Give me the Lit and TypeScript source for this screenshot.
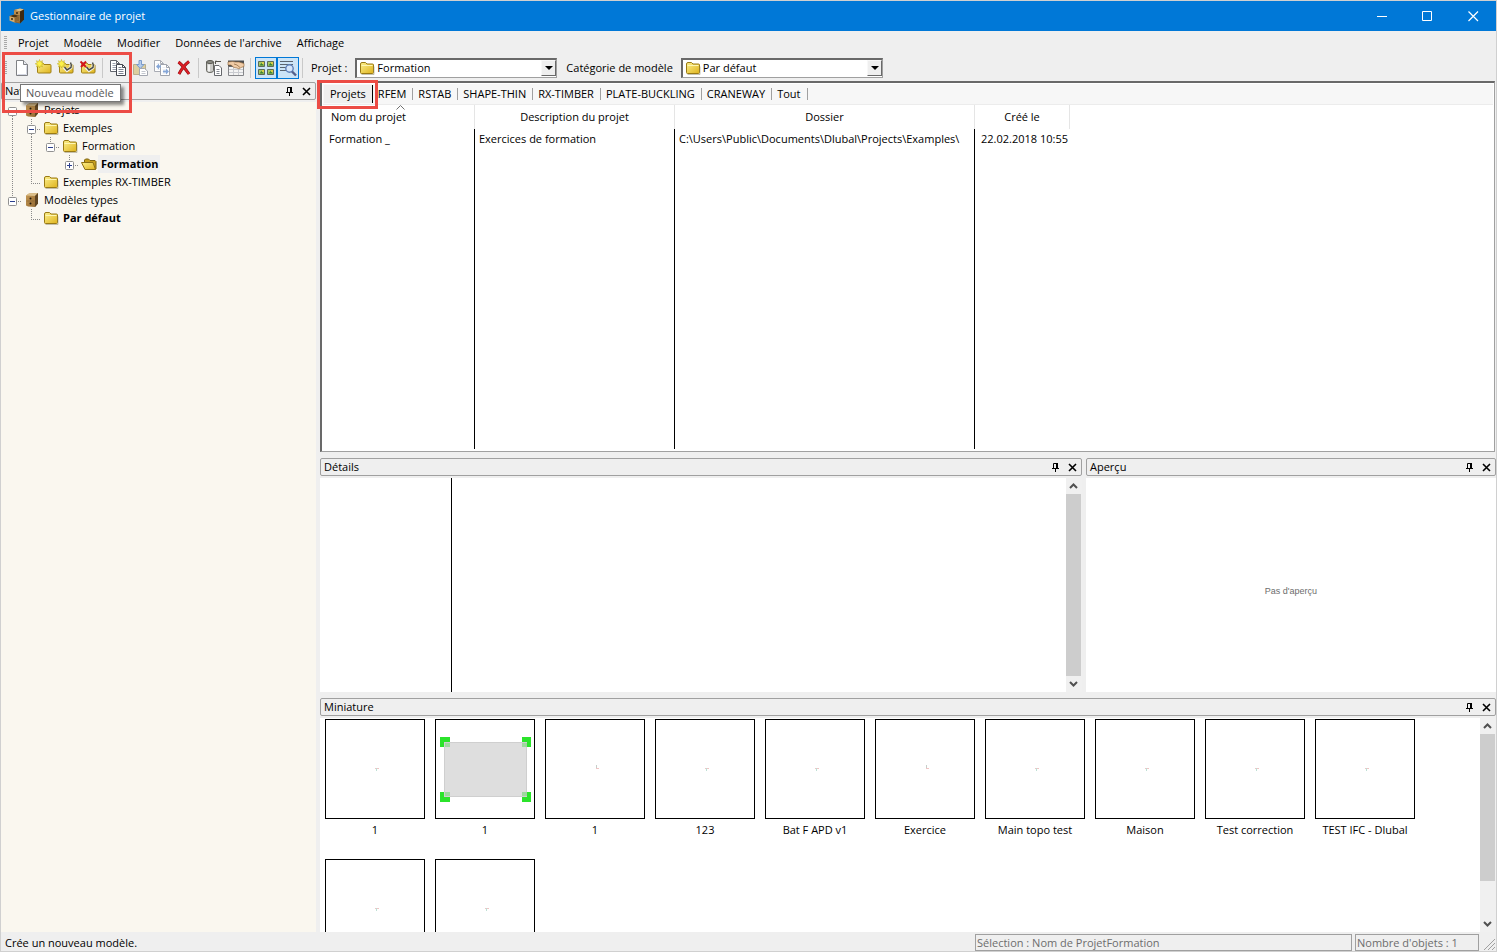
import { LitElement, html, css, svg, nothing } from "lit";
import { customElement } from "lit/decorators.js";
import { classMap } from "lit/directives/class-map.js";

const defs = svg`
  <defs>
    <linearGradient id="fy" x1="0" y1="0" x2="1" y2="1">
      <stop offset="0" stop-color="#fbef8c"/><stop offset="1" stop-color="#dfb31c"/>
    </linearGradient>
    <linearGradient id="wd" x1="0" y1="0" x2="1" y2="1">
      <stop offset="0" stop-color="#c79a55"/><stop offset="1" stop-color="#8f6630"/>
    </linearGradient>
  </defs>`;

const folder = html`<svg width="16" height="16" viewBox="0 0 16 16" aria-hidden="true">${defs}
  <path d="M1.500 4q0-1.500 1.500-1.500h3.500l1.500 1.500h5.500q1 0 1 1v7.500q0 1-1 1H2.500q-1 0-1-1z" fill="url(#fy)" stroke="#9a7b14"/>
  <path d="M2.500 5.500h11" stroke="#fdf6b4"/><path d="M2.500 14.500h12.500v-8" fill="none" stroke="#8d8768" stroke-opacity=".5"/></svg>`;

const folderOpen = html`<svg width="16" height="16" viewBox="0 0 16 16" aria-hidden="true">${defs}
  <path d="M3.500 12.500v-8.500l1-1h3l1.500 1.500h5l1 1v7.500z" fill="#c79f1e" stroke="#7c6412"/>
  <path d="M.5 6.500h11.500l2.500 7H4z" fill="url(#fy)" stroke="#8d7015"/></svg>`;

const cabinet = html`<svg width="16" height="16" viewBox="0 0 16 16" aria-hidden="true">${defs}
  <path d="M2 3.500l3-2 9-.5v10.500l-3 3.500-7-.5-2-1z" fill="url(#wd)"/><path d="M2 3.500l3-2 9-.5-3 3z" fill="#dcc08b"/>
  <path d="M11 4l3-3v10.500l-3 3.500z" fill="#5f4522"/><path d="M2.500 9h8" stroke="#8a6534" stroke-width=".7"/>
  <circle cx="6.500" cy="6.500" r="1" fill="#22180a"/><circle cx="6.500" cy="11.500" r="1" fill="#22180a"/></svg>`;

const appIcon = html`<svg width="16" height="16" viewBox="0 0 16 16" aria-hidden="true">
  <path d="M5 2l6-1.500 4 1v10l-4 4-5-1z" fill="#8a6534"/><path d="M5 2l6-1.500 4 1-4 2z" fill="#dcc08b"/><path d="M11 3.500l4-2v10l-4 4z" fill="#3f2a10"/>
  <path d="M5 2.500l6 1v4l-6-1z" fill="#b98c4c"/><path d="M.5 8l5-1.500 5 1.500v5l-5 1.500-5-2z" fill="#d6ab69"/><path d="M.5 8l5-1.500 5 1.500-5 1.500z" fill="#4a3314"/>
  <path d="M5.500 9.500l5-1.500v5l-5 1.500z" fill="#8d6632"/><circle cx="8" cy="5" r=".9" fill="#2a1c08"/><circle cx="3" cy="11" r=".9" fill="#2a1c08"/></svg>`;

const star = svg`<path d="M4.500.5l.8 2.200L7.500 1.700 6.600 4l2.200.8-2.200.9.900 2.200-2.200-1L4.500 9l-.9-2.100-2.200 1 .9-2.200L.2 4.800l2.100-.8-.9-2.300 2.200 1z" fill="#fdf14a" stroke="#b9a51b" stroke-width=".5"/>`;
const base = svg`<path d="M2.500 5.500q0-1.500 1.500-1.500h4l1 1.500h6q1 0 1 1v6.500q0 1-1 1H3.500q-1 0-1-1z" fill="url(#fy)" stroke="#a08018"/>`;
const hook = svg`<path d="M7 8.500l3 3L14 8.500V3.500" fill="none" stroke="#f4f4ee" stroke-width="3"/><path d="M7.500 8l2.500 3 4-2.500q1-2-.5-5" fill="none" stroke="#4b4b42" stroke-width="1.500"/>`;
const sheet = (x: number, y: number, c: string, l: string) => svg`
  <path d="M${x} ${y}h6l3 3v8h-9z" fill="#fff" stroke="${c}"/><path d="M${x + 6} ${y}v3h3" fill="none" stroke="${c}"/>
  <path d="M${x + 2} ${y + 3}h3M${x + 2} ${y + 5}h5M${x + 2} ${y + 7}h5M${x + 2} ${y + 9}h5" stroke="${l}"/>`;

const icon = (body: unknown) =>
  html`<svg width="18" height="18" viewBox="0 0 18 18" aria-hidden="true">${defs}${body}</svg>`;

const icons = {
  file: icon(svg`<path d="M3.500 1.500h7l4 4v11h-11z" fill="#fff" stroke="#7f8185"/><path d="M10.500 1.500v4h4" fill="#e8eaf0" stroke="#7f8185"/><path d="M4.500 15.500h9v-9" fill="none" stroke="#d4d7e2"/>`),
  folderNew: icon(svg`${base}${star}`),
  folderLink: icon(svg`${base}${star}${hook}`),
  folderUnlink: icon(svg`${base}${hook}<path d="M1.500 2.500l5.500 5.500M7 2.500L2 8" stroke="#d4161c" stroke-width="1.900"/>`),
  copy: icon(svg`${sheet(1.5, 1.5, "#62656d", "#9aa0ad")}${sheet(7.5, 5.5, "#44474f", "#7d8391")}`),
  paste: icon(svg`<path d="M2.500 5.500h12v10h-12z" fill="#ddcf9f" stroke="#b9ae8d"/><path d="M8 1.500h2.500v4h2.500l-3.700 4-3.800-4H8z" fill="#b5cdee" stroke="#7c9ccb"/>
    <path d="M8.500 9.500h5l3 2.500v4.500h-8z" fill="#fff" stroke="#a3a7b0"/><path d="M10.500 12.500h4M10.500 14.500h4" stroke="#c3c7cf"/>`),
  duplicate: icon(svg`${sheet(1.5, 1.5, "#a9acb4", "#eef0f4")}${sheet(7.5, 5.5, "#a0a4ad", "#eef0f4")}<path d="M3 7.500l3-3v2h2v2H6v2zM16 12.500l-3-3v2h-3v2h3v2z" fill="#86a7d8"/>`),
  remove: icon(svg`<path d="M3.500 3q5 4 10.500 12M14 2.500Q8 7 4 15" fill="none" stroke="#8f1014" stroke-width="3"/><path d="M3.500 3q5 4 10.500 12M14 2.500Q8 7 4 15" fill="none" stroke="#dd1f26" stroke-width="1.800"/>`),
  archive: icon(svg`<path d="M1.500 3v8.500q0 2 3.500 2t3.500-2V3" fill="#c9c9c6" stroke="#66665f"/><ellipse cx="5" cy="3" rx="3.500" ry="1.500" fill="#8f8f88" stroke="#55554f"/><path d="M4 5.500v7" stroke="#fff" stroke-width="1.500"/>
    <path d="M10.500 5V2.500h5.500M10 3.500l1-2" fill="none" stroke="#55554f"/><path d="M9.500 6.500h4.500l2.500 2.500v7.500h-7z" fill="#fff" stroke="#66686c"/><path d="M11.500 10.500h3M11.500 12.500h3M11.500 14.500h3" stroke="#868a92"/>`),
  share: icon(svg`<path d="M1.500 7.500h15v9h-15z" fill="#f4f4f4" stroke="#85868a"/><path d="M2 10.500h14M2 13.500h14M6.500 8v8M11.500 8v8" stroke="#c9cbd0"/><path d="M1 1.500h16v6H1z" fill="#4b4c50"/>
    <path d="M1 3l4.500-.5 3 .5 3.500 0 5 1.500v3l-3 1-2 1.500-2-1-3-.5L4 6H1z" fill="#f0cba6" stroke="#8a6238" stroke-width=".6"/><path d="M7 5l3 1 3 2.500" fill="none" stroke="#8a6238" stroke-width=".7"/>`),
  tiles: icon(svg`${[[1.5, 2.5], [10.5, 2.5], [1.5, 10.5], [10.5, 10.5]].map(
    ([x, y]) => svg`<path d="M${x} ${y}h6v5h-6z" fill="#a5c864" stroke="#5c6b57"/><path d="M${x + 1} ${y + 4}l2-2.500 2.500 2.500z" fill="#3c8130"/><path d="M${x + 3.5} ${y + 1.5}h2" stroke="#efd23c" stroke-width="1.400"/>`)}`),
  details: icon(svg`<path d="M1 2.500h13M1 5.500h13M1 8.500h7M1 11.500h6" stroke="#5a6470" stroke-width="1.200"/><circle cx="10.500" cy="9.500" r="3.700" fill="#d5e6fb" stroke="#5e7fb8" stroke-width="1.400"/><path d="M13 12.500l4 4" stroke="#54608c" stroke-width="2.400"/>`),
};

const pin = html`<svg width="9" height="9" viewBox="0 0 9 9" aria-hidden="true"><path d="M2.500 5V.5h4V5M1 5.500h7M4.500 6v3" fill="none" stroke="#000"/><path d="M6 0v5" stroke="#000" stroke-width="2"/></svg>`;
const cross = html`<svg width="9" height="9" viewBox="0 0 9 9" aria-hidden="true"><path d="M1 1l7 7M8 1L1 8" stroke="#000" stroke-width="1.600"/></svg>`;
const chevron = (up: boolean) => html`<svg width="9" height="6" viewBox="0 0 9 6" aria-hidden="true"><path d="${up ? "M1 5l3.500-3.500L8 5" : "M1 1l3.500 3.500L8 1"}" fill="none" stroke="#505050" stroke-width="2"/></svg>`;

type Guide = "v" | "first" | "mid" | "last" | "plus" | "elbow" | "none";
interface Row { label: string; guides: Guide[]; icon: unknown; bold?: boolean; selected?: boolean; }

const rows: Row[] = [
  { label: "Projets", guides: ["first"], icon: cabinet },
  { label: "Exemples", guides: ["v", "mid"], icon: folder },
  { label: "Formation", guides: ["v", "v", "last"], icon: folder },
  { label: "Formation", guides: ["v", "v", "none", "plus"], icon: folderOpen, bold: true, selected: true },
  { label: "Exemples RX-TIMBER", guides: ["v", "elbow"], icon: folder },
  { label: "Modèles types", guides: ["last"], icon: cabinet },
  { label: "Par défaut", guides: ["none", "elbow"], icon: folder, bold: true },
];

const guide = (g: Guide) => {
  const boxed = ["first", "mid", "last", "plus"].includes(g);
  return html`<svg width="19" height="18" viewBox="0 0 19 18" aria-hidden="true">
    ${g === "v" ? svg`<path d="M9.500 0v18" class="dots"/>` : nothing}
    ${g === "elbow" ? svg`<path d="M9.500 0v10M9 10.500h10" class="dots"/>` : nothing}
    ${boxed ? svg`
      ${g !== "first" ? svg`<path d="M9.500 0v6" class="dots"/>` : nothing}
      ${g === "first" || g === "mid" ? svg`<path d="M9.500 15v3" class="dots"/>` : nothing}
      <path d="M15 10.500h4" class="dots"/>
      <rect x="5.500" y="6.500" width="8" height="8" rx="1" fill="#fff" stroke="#919191"/>
      <path d="${g === "plus" ? "M7 10.500h5M9.500 8v5" : "M7 10.500h5"}" stroke="#2b3f8e"/>` : nothing}
  </svg>`;
};

@customElement("dock-panel")
export class DockPanel extends LitElement {
  static properties = { heading: { type: String } };
  declare heading: string;
  static styles = css`
    :host { display: flex; flex-direction: column; min-width: 0; min-height: 0; }
    .bar { display: flex; align-items: center; height: 18px; border: 1px solid #a0a0a0; border-radius: 2px; box-sizing: border-box; padding-left: 3px; background: #efefef; flex: none; }
    h2 { flex: 1; margin: 0; font-size: 11px; font-weight: 400; line-height: 16px; }
    button { all: unset; display: grid; place-items: center; width: 17px; height: 14px; }
    .body { flex: 1; display: flex; min-height: 0; margin-top: 2px; background: var(--panel-bg, #fff); overflow: hidden; }
  `;
  render() {
    return html`<div class="bar"><h2>${this.heading}</h2>
      <button type="button" aria-label="Épingler">${pin}</button><button type="button" aria-label="Fermer">${cross}</button></div>
      <div class="body"><slot></slot></div>`;
  }
}

@customElement("scroll-bar")
export class ScrollBar extends LitElement {
  static properties = { share: { type: Number } };
  declare share: number;
  static styles = css`
    :host { display: flex; flex-direction: column; width: 15px; flex: none; background: #f0f0f0; border-right: 1px solid #f0f0f0; }
    .arrow { all: unset; display: grid; place-items: center; height: 16px; flex: none; }
    .track { flex: 1; }
    .thumb { background: #cdcdcd; }
  `;
  render() {
    return html`<button type="button" class="arrow" aria-label="Défiler vers le haut">${chevron(true)}</button>
      <div class="track"><div class="thumb" style="height:${this.share}%"></div></div>
      <button type="button" class="arrow" aria-label="Défiler vers le bas">${chevron(false)}</button>`;
  }
}

@customElement("app-root")
export class AppRoot extends LitElement {
  static styles = css`
    :host { display: flex; flex-direction: column; position: relative; height: 100vh; box-sizing: border-box; border: 1px solid #d0d0d0; overflow: hidden;
      background: #efefef; color: #000; font: 11px/18px "Open Sans", "Noto Sans", sans-serif; }
    svg { display: block; flex: none; }
    button { all: unset; box-sizing: border-box; }
    .title { display: flex; align-items: center; height: 30px; padding-left: 8px; background: #0078d7; color: #fff; flex: none; }
    .title h1 { flex: 1; margin: 0 0 0 5px; font-size: 11px; font-weight: 400; }
    .title button { display: grid; place-items: center; width: 46px; height: 28px; }
    .menu { display: flex; align-items: center; height: 23px; gap: 15px; padding-left: 3px; flex: none; }
    .grip { width: 3px; height: 14px; background: repeating-linear-gradient(#a8a8a8 0 1px, transparent 1px 2px); }
    .menu .grip { margin-right: -4px; }
    .tools { display: flex; align-items: center; height: 27px; padding-left: 3px; flex: none; }
    .tools .grip { margin-right: 4px; }
    .tool { display: grid; place-items: center; width: 22px; height: 22px; }
    .tool.on { border: 1px solid #0078d7; background: #cce4f7; }
    .sep { width: 1px; height: 20px; margin: 0 4px 0 3px; background: #c9c9c9; }
    .tools label { margin: 0 8px 0 4px; }
    .tools .combo + label { margin-left: 9px; }
    .combo { position: relative; display: flex; width: 202px; height: 20px; box-sizing: border-box; border: 1px solid #a0a0a0; border-top: 2px solid #696969; border-left: 2px solid #696969; background: #fff; }
    .combo svg { position: absolute; left: 2px; top: 0; pointer-events: none; }
    .combo select { appearance: none; flex: 1; border: 0; margin: 0; padding: 0 18px 2px 20px; background: none; font: inherit; line-height: 15px; color: #000; }
    .combo .drop { position: absolute; right: 0; top: 0; width: 15px; height: 16px; box-sizing: border-box; border: 1px solid #f8f8f8; border-right-color: #696969; border-bottom-color: #696969; background: #efefef; pointer-events: none; }
    .drop::after { content: ""; position: absolute; left: 3px; top: 5px; border: 4px solid transparent; border-top-color: #000; border-bottom: 0; }
    .work { flex: 1; display: grid; grid-template-columns: 315px minmax(0, 1fr); column-gap: 4px; min-height: 0; }
    .nav { --panel-bg: #faf7ef; padding-top: 1px; }
    .tree { list-style: none; margin: -1px 0 0; padding: 0 0 0 2px; }
    .tree li { display: flex; align-items: center; height: 18px; }
    .tree .ico { width: 19px; display: grid; place-items: center; }
    .tree .name { padding: 0 2px 0 3px; }
    .bold { font-weight: 700; }
    .picked { background: #efefef; }
    .dots { fill: none; stroke: #8a8a8a; stroke-dasharray: 1 1; }
    .main { display: grid; grid-template-rows: 371fr 234fr 234fr; row-gap: 6px; min-height: 0; }
    .list { display: flex; flex-direction: column; min-height: 0; border: 1px solid #a0a0a0; border-top: 2px solid #696969; border-left: 2px solid #696969; margin-right: 1px; padding: 1px 1px 2px; background: #fff; }
    .tabs { display: flex; align-items: center; height: 21px; background: #f7f7f7; flex: none; border-bottom: 1px solid #ececec; box-sizing: border-box; padding-left: 1px; }
    .tabs button { padding: 0 6px 0 5px; height: 12px; line-height: 12px; border-right: 1px solid #a0a0a0; }
    .tabs .current { height: 18px; line-height: 18px; padding-left: 6px; border-right-color: #000; background: #efefef; }
    table { flex: 1; width: 100%; height: 100%; table-layout: fixed; border-collapse: separate; border-spacing: 0; }
    .wrap { flex: 1; min-height: 0; display: flex; }
    th { position: relative; height: 24px; padding: 0 6px; font-weight: 400; border-right: 1px solid #e5e5e5; box-sizing: border-box; }
    th:first-child { text-align: left; padding-left: 8px; }
    td { height: 20px; padding: 0 0 0 4px; border-right: 1px solid #000; white-space: nowrap; overflow: hidden; box-sizing: border-box; }
    td:first-child { padding-left: 6px; }
    td:nth-child(4) { padding-left: 6px; }
    td:nth-child(n + 4), th:last-child { border-right: 0; }
    .fill td { height: auto; }
    .sort { position: absolute; left: 73px; top: 0; }
    .c1 { width: 152px; } .c2 { width: 200px; } .c3 { width: 300px; } .c4 { width: 95px; }
    .pair { display: grid; grid-template-columns: 762fr 410fr; column-gap: 4px; min-height: 0; }
    .props { flex: 1; display: flex; }
    .props .key { width: 131px; border-right: 1px solid #000; }
    .empty { margin: auto; padding-top: 12px; color: #6d6d6d; font: 9px/12px "Liberation Sans", sans-serif; }
    .thumbs { flex: 1; display: flex; flex-wrap: wrap; align-content: flex-start; gap: 10px; padding: 1px 5px; list-style: none; margin: 0; }
    .thumbs li { width: 100px; height: 130px; text-align: center; white-space: nowrap; }
    .thumbs .pic { border: 1px solid #000; margin-bottom: 2px; }
    .status { display: flex; align-items: center; height: 19px; box-sizing: border-box; padding: 2px 0 0 4px; gap: 3px; flex: none; }
    .status .hint { flex: 1; margin: 0; }
    .cell { height: 17px; line-height: 16px; box-sizing: border-box; border: 1px solid #a0a0a0; padding-left: 1px; color: #6d6d6d; }
    .cell.wide { width: 377px; } .cell.short { width: 124px; }
    .status svg { align-self: flex-end; }
    .tip { position: absolute; left: 19px; top: 83px; height: 18px; line-height: 16px; box-sizing: border-box; border: 1px solid #767676; background: #fff; color: #575757; padding: 0 6px 0 5px; box-shadow: 3px 3px 3px rgba(0, 0, 0, .45); }
    .mark { position: absolute; border: 3px solid #ec4c45; box-sizing: border-box; pointer-events: none; }
    .mark.new { left: 1px; top: 51px; width: 130px; height: 61px; }
    .mark.tab { left: 316px; top: 79px; width: 61px; height: 29px; }
  `;

  private tools: [keyof typeof icons | "sep", string][] = [
    ["file", "Nouveau modèle"], ["folderNew", "Nouveau projet"], ["folderLink", "Relier un projet"], ["folderUnlink", "Dissocier un projet"], ["sep", ""],
    ["copy", "Copier"], ["paste", "Coller"], ["duplicate", "Dupliquer"], ["remove", "Supprimer"], ["sep", ""],
    ["archive", "Archiver"], ["share", "Partager"], ["sep", ""], ["tiles", "Miniature"], ["details", "Détails"], ["sep", ""],
  ];

  private combo(id: string, value: string) {
    return html`<div class="combo">${folder}<select id=${id}><option>${value}</option></select><span class="drop"></span></div>`;
  }

  private thumb(name: string, kind: string) {
    return html`<li><svg class="pic" width="98" height="98" viewBox="0 0 98 98" aria-hidden="true">
      ${kind === "plate" ? svg`
        <path d="M4 17h10v10H4zM86 17h9v10H86zM4 72h10v10H4zM86 72h9v10H86z" fill="#2be32b"/>
        <rect x="8.500" y="22.500" width="82" height="54" fill="#dcdcdc" fill-opacity=".93" stroke="#cfcfcf"/>
        <path d="M9 23h5v4H9zM86 23h5v4h-5zM9 72h5v4H9zM86 72h5v4h-5z" fill="#7fd67f" fill-opacity=".6"/>`
      : kind === "corner" ? svg`<path d="M50.500 45v3" stroke="#c6cfca"/><path d="M50 48.500h3" stroke="#efc4c4"/>`
      : svg`<path d="M49 48.500h4" stroke="#efc4c4"/><path d="M50.500 48v3" stroke="#bfe0d4"/>`}
    </svg>${name}</li>`;
  }

  render() {
    return html`
      <header class="title">${appIcon}<h1>Gestionnaire de projet</h1>
        <button type="button" aria-label="Réduire"><svg width="11" height="11"><path d="M1 5.500h10" stroke="#fff"/></svg></button>
        <button type="button" aria-label="Agrandir"><svg width="11" height="11"><path d="M.5.5h9v9h-9z" fill="none" stroke="#fff"/></svg></button>
        <button type="button" aria-label="Fermer"><svg width="11" height="11"><path d="M.5.5l9.500 9.500M10 .5L.5 10" stroke="#fff" stroke-width="1.200"/></svg></button>
      </header>
      <nav class="menu"><span class="grip"></span>
        ${["Projet", "Modèle", "Modifier", "Données de l'archive", "Affichage"].map((m) => html`<button type="button">${m}</button>`)}
      </nav>
      <div class="tools"><span class="grip"></span>
        ${this.tools.map(([k, label]) => k === "sep" ? html`<span class="sep"></span>` : html`<button type="button" aria-label=${label}
          class=${classMap({ tool: true, on: k === "tiles" || k === "details" })}>${icons[k]}</button>`)}
        <label for="project">Projet :</label>${this.combo("project", "Formation")}
        <label for="category">Catégorie de modèle</label>${this.combo("category", "Par défaut")}
      </div>
      <div class="work">
        <dock-panel class="nav" heading="Navigateur">
          <ul class="tree">${rows.map((r) => html`<li>${r.guides.map(guide)}<span class="ico">${r.icon}</span>
            <span class=${classMap({ name: true, bold: !!r.bold, picked: !!r.selected })}>${r.label}</span></li>`)}</ul>
        </dock-panel>
        <main class="main">
          <section class="list">
            <div class="tabs">${["Projets", "RFEM", "RSTAB", "SHAPE-THIN", "RX-TIMBER", "PLATE-BUCKLING", "CRANEWAY", "Tout"].map((t, i) =>
              html`<button type="button" class=${classMap({ current: i === 0 })}>${t}</button>`)}</div>
            <div class="wrap"><table>
              <colgroup><col class="c1"><col class="c2"><col class="c3"><col class="c4"><col></colgroup>
              <thead><tr><th>Nom du projet<svg class="sort" width="9" height="5" viewBox="0 0 9 5"><path d="M.5 4.500l4-4 4 4" fill="none" stroke="#707070"/></svg></th>
                <th>Description du projet</th><th>Dossier</th><th>Créé le</th><th></th></tr></thead>
              <tbody>
                <tr><td>Formation _</td><td>Exercices de formation</td><td>C:\\Users\\Public\\Documents\\Dlubal\\Projects\\Examples\\</td><td>22.02.2018 10:55</td><td></td></tr>
                <tr class="fill"><td></td><td></td><td></td><td></td><td></td></tr>
              </tbody>
            </table></div>
          </section>
          <div class="pair">
            <dock-panel heading="Détails"><div class="props"><div class="key"></div></div><scroll-bar share="100"></scroll-bar></dock-panel>
            <dock-panel heading="Aperçu"><p class="empty">Pas d'aperçu</p></dock-panel>
          </div>
          <dock-panel heading="Miniature">
            <ul class="thumbs">
              ${[["1", "axis"], ["1", "plate"], ["1", "corner"], ["123", "axis"], ["Bat F APD v1", "axis"], ["Exercice", "corner"], ["Main topo test", "axis"],
                ["Maison", "axis"], ["Test correction", "axis"], ["TEST IFC - Dlubal", "axis"], ["", "axis"], ["", "axis"]].map(([n, k]) => this.thumb(n, k))}
            </ul><scroll-bar share="81"></scroll-bar>
          </dock-panel>
        </main>
      </div>
      <footer class="status"><p class="hint">Crée un nouveau modèle.</p>
        <span class="cell wide">Sélection : Nom de ProjetFormation</span><span class="cell short">Nombre d'objets : 1</span>
        <svg width="14" height="13"><path d="M2 12L13 1M6 12l7-7M10 12l3-3" stroke="#a0a0a0"/></svg>
      </footer>
      <div class="tip" role="tooltip">Nouveau modèle</div>
      <div class="mark new"></div><div class="mark tab"></div>`;
  }
}
